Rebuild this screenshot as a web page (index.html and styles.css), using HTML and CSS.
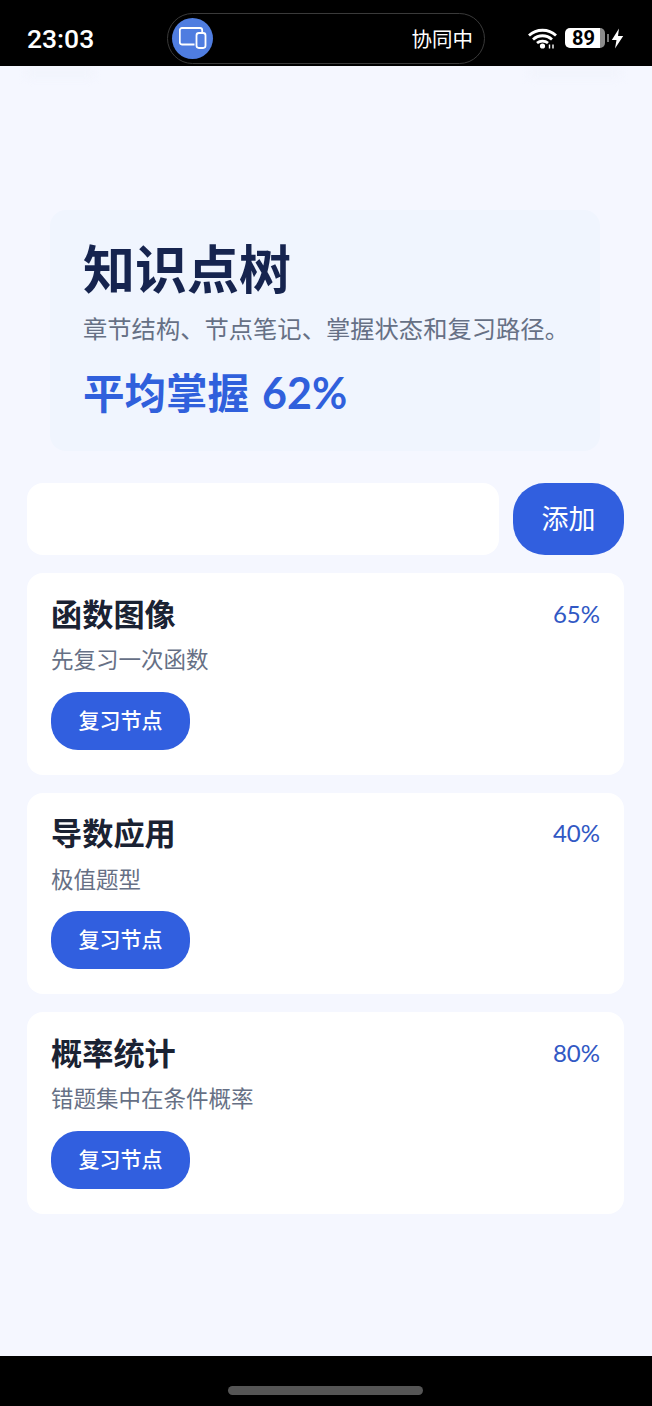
FILE: index.html
```html
<!DOCTYPE html>
<html lang="zh-CN">
<head>
    <meta charset="UTF-8">
    <meta name="viewport" content="width=device-width, initial-scale=1.0">
    <title>知识点树</title>
    <link rel="stylesheet" href="styles.css">
</head>
<body>

<div class="status-bar">
    <span class="clock">23:03</span>
    <div class="island">
        <span class="island-icon">
            <svg width="28" height="28" viewBox="0 0 28 28" fill="none" stroke="#fff" stroke-width="1.8" stroke-linejoin="round">
                <path d="M15.500 20.500H3a2.200 2.200 0 0 1-2.200-2.200V6.200A2.200 2.200 0 0 1 3 4H21a2.200 2.200 0 0 1 2.200 2.200V8.500"/>
                <rect x="17.500" y="9" width="9" height="15" rx="2.400"/>
            </svg>
        </span>
        <span class="island-text">协同中</span>
    </div>
    <div class="status-icons">
        <svg class="wifi" width="29" height="21" viewBox="0 0 29 21" fill="none" stroke="#fff" stroke-width="2.800">
            <path d="M1 7.500C8.500 0.500 20.500 0.500 28 7.500"/>
            <path d="M5 11.500C10.500 6.500 18.500 6.500 24 11.500"/>
            <path d="M9 15C12 12.500 17 12.500 20 15"/>
            <circle cx="14.500" cy="18" r="2.600" fill="#fff" stroke="none"/>
            <path d="M21.500 16.500v4M25 16.500v4" stroke-width="1.400"/>
        </svg>
        <div class="battery">
            <span class="battery-level">89</span>
            <span class="battery-cap"></span>
        </div>
        <svg class="bolt" width="13" height="21" viewBox="0 0 13 21" fill="#fff">
            <path d="M8 0.500L0.800 12H5.500L4 20.500L12.200 8H7Z"/>
        </svg>
    </div>
</div>

<main class="page">
    <div class="ghost-row">
        <span class="ghost ghost-left"></span>
        <span class="ghost ghost-right"></span>
    </div>

    <section class="hero">
        <h1>知识点树</h1>
        <p class="hero-sub">章节结构、节点笔记、掌握状态和复习路径。</p>
        <p class="hero-metric">平均掌握 <span class="metric-num">62%</span></p>
    </section>

    <form class="add-row">
        <input class="add-input" type="text">
        <button class="add-btn" type="button">添加</button>
    </form>

    <div class="node-list">
        <article class="node">
            <div class="node-head">
                <h2>函数图像</h2>
                <span class="node-pct">65%</span>
            </div>
            <p class="node-note">先复习一次函数</p>
            <button class="review-btn" type="button">复习节点</button>
        </article>
        <article class="node">
            <div class="node-head">
                <h2>导数应用</h2>
                <span class="node-pct">40%</span>
            </div>
            <p class="node-note">极值题型</p>
            <button class="review-btn" type="button">复习节点</button>
        </article>
        <article class="node">
            <div class="node-head">
                <h2>概率统计</h2>
                <span class="node-pct">80%</span>
            </div>
            <p class="node-note">错题集中在条件概率</p>
            <button class="review-btn" type="button">复习节点</button>
        </article>
    </div>
</main>

<div class="nav-bar">
    <span class="home-pill"></span>
</div>

</body>
</html>
```

FILE: styles.css
```css
* {
    box-sizing: border-box;
}
body {
    display: flex;
    flex-direction: column;
    height: 1406px;
    margin: 0;
    overflow: hidden;
    font-family: Lato, "Noto Sans CJK SC", sans-serif;
    background-color: #000;
}
h1, h2, p {
    margin: 0;
}

.status-bar {
    display: flex;
    align-items: center;
    height: 66px;
    padding: 10px 28px 0 27px;
    color: #fff;
    background-color: #000;
}
.clock {
    width: 140px;
    font-family: Roboto, sans-serif;
    font-size: 26.500px;
    font-weight: 500;
}
.island {
    display: flex;
    align-items: center;
    justify-content: space-between;
    width: 318px;
    height: 51px;
    padding: 0 11px 0 4px;
    border: 1px solid #3a3a3a;
    border-radius: 26px;
}
.island-icon {
    display: flex;
    align-items: center;
    justify-content: center;
    width: 41px;
    height: 41px;
    border-radius: 50%;
    background-color: #4f7de0;
}
.island-text {
    font-size: 20.500px;
}
.status-icons {
    display: flex;
    align-items: center;
    margin-left: auto;
}
.battery {
    display: flex;
    align-items: center;
    gap: 2px;
    margin-left: 8px;
}
.battery-level {
    width: 40px;
    height: 20px;
    padding-right: 3px;
    border-radius: 5px;
    font-family: Roboto, sans-serif;
    font-size: 20px;
    font-weight: 700;
    line-height: 20px;
    text-align: center;
    color: #000;
    background: linear-gradient(to right, #fff 88%, #8c8c8c 88%);
}
.battery-cap {
    width: 2px;
    height: 8px;
    background-color: #777;
}
.bolt {
    margin-left: 2px;
}

.page {
    flex: 1;
    overflow: hidden;
    padding: 0 28px 0 27px;
    background-color: #f5f7ff;
}
.ghost-row {
    display: flex;
    justify-content: space-between;
    height: 144px;
    padding: 2px 4px 0 0;
}
.ghost {
    height: 9px;
    background-color: #f1f4fc;
    filter: blur(4px);
}
.ghost-left {
    width: 66px;
}
.ghost-right {
    width: 90px;
}

.hero {
    height: 241px;
    margin: 0 24px 0 23px;
    padding: 26px 20px 26px 33px;
    border-radius: 16px;
    background-color: #f0f5fe;
}
.hero h1 {
    font-size: 52px;
    font-weight: 700;
    line-height: 66px;
    color: #16244f;
}
.hero-sub {
    margin-top: 10px;
    font-size: 24.300px;
    line-height: 34px;
    color: #667085;
}
.hero-metric {
    margin-top: 18px;
    font-size: 41.500px;
    font-weight: 700;
    line-height: 58px;
    word-spacing: 3px;
    color: #3060dc;
}
.metric-num {
    font-size: 43px;
}

.add-row {
    display: flex;
    gap: 14px;
    height: 72px;
    margin: 32px 0 18px;
}
.add-input {
    flex: 1;
    min-width: 0;
    border: none;
    border-radius: 16px;
    background-color: #fff;
}
.add-btn {
    width: 111px;
    padding: 0 0 4px;
    border: none;
    border-radius: 32px;
    font-family: inherit;
    font-size: 27px;
    color: #fff;
    background-color: #315fdf;
}

.node-list {
    display: flex;
    flex-direction: column;
    gap: 18px;
}
.node {
    height: 201.500px;
    padding: 17px 24px 0 24px;
    border-radius: 16px;
    background-color: #fff;
}
.node-head {
    display: flex;
    align-items: center;
    justify-content: space-between;
    height: 44px;
}
.node-head h2 {
    font-size: 31.200px;
    font-weight: 700;
    color: #1a2233;
}
.node-pct {
    padding-top: 2px;
    font-size: 24px;
    color: #3158c4;
}
.node-note {
    margin-top: 10px;
    font-size: 22.500px;
    line-height: 32px;
    color: #667085;
}
.review-btn {
    display: block;
    width: 139px;
    height: 58px;
    margin-top: 15.900px;
    padding: 0 0 4px;
    border: none;
    border-radius: 27px;
    font-family: inherit;
    font-size: 21px;
    font-weight: 500;
    color: #fff;
    background-color: #315fdf;
}

.nav-bar {
    display: flex;
    justify-content: center;
    height: 50px;
    padding-top: 30px;
    background-color: #000;
}
.home-pill {
    width: 195px;
    height: 9px;
    margin-right: 2px;
    border-radius: 5px;
    background-color: #555;
}
```
